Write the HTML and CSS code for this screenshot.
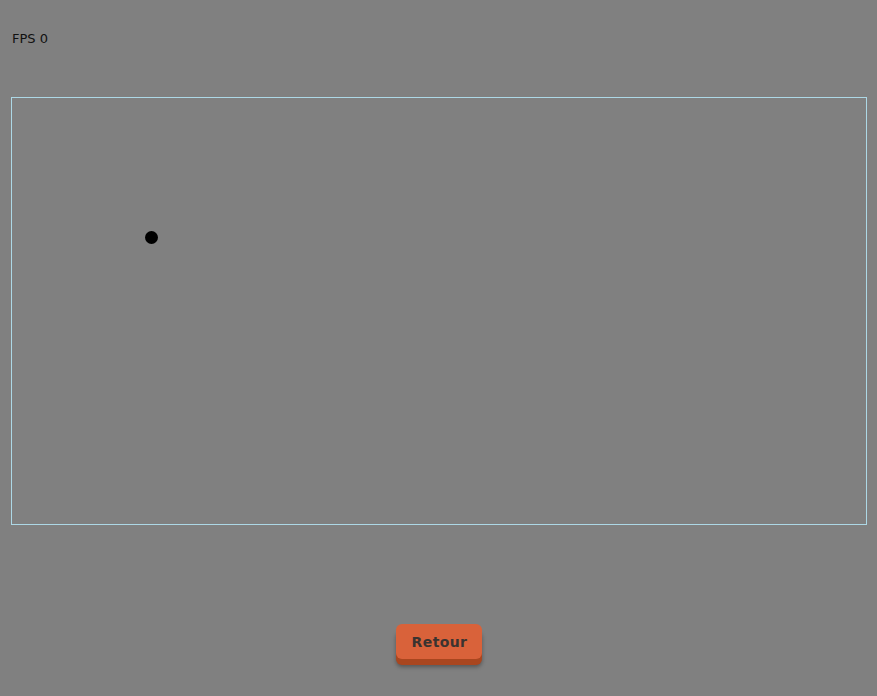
FILE: index.html
```html
<!DOCTYPE html>
<html>
<head>
<meta charset="utf-8">
<link rel="stylesheet" href="styles.css">
</head>
<body>
<div class="page">
  <div class="fps">FPS 0</div>
  <div class="stage">
    <div class="ball" style="left:133px;top:133px"></div>
  </div>
  <div class="actions">
    <button class="btn">Retour</button>
  </div>
</div>
</body>
</html>
```
FILE: styles.css
```css
html, body {
  margin: 0;
  padding: 0;
  background: #808080;
  height: 100%;
}
.page {
  font-family: "DejaVu Sans", sans-serif;
  display: flex;
  flex-direction: column;
  padding: 0 10px 0 11px;
}
.fps {
  margin-top: 31px;
  padding-left: 1px;
  height: 15px;
  line-height: 15px;
  font-size: 13px;
  color: #111;
}
.stage {
  position: relative;
  margin-top: 51px;
  width: 854px;
  height: 426px;
  border: 1px solid #add8e6;
}
.ball {
  position: absolute;
  width: 13px;
  height: 13px;
  border-radius: 50%;
  background: #000;
}
.actions {
  display: flex;
  justify-content: center;
  margin-top: 99px;
}
.btn {
  width: 86px;
  height: 35px;
  border: none;
  border-radius: 6px;
  background: #d9623a;
  color: #3a3330;
  font-family: "DejaVu Sans", sans-serif;
  font-weight: bold;
  font-size: 14px;
  letter-spacing: 0.4px;
  padding: 0 0 0 1px;
  box-shadow: 0 6px 0 #a9461f, 0 8px 4px rgba(0,0,0,0.35);
}
```
